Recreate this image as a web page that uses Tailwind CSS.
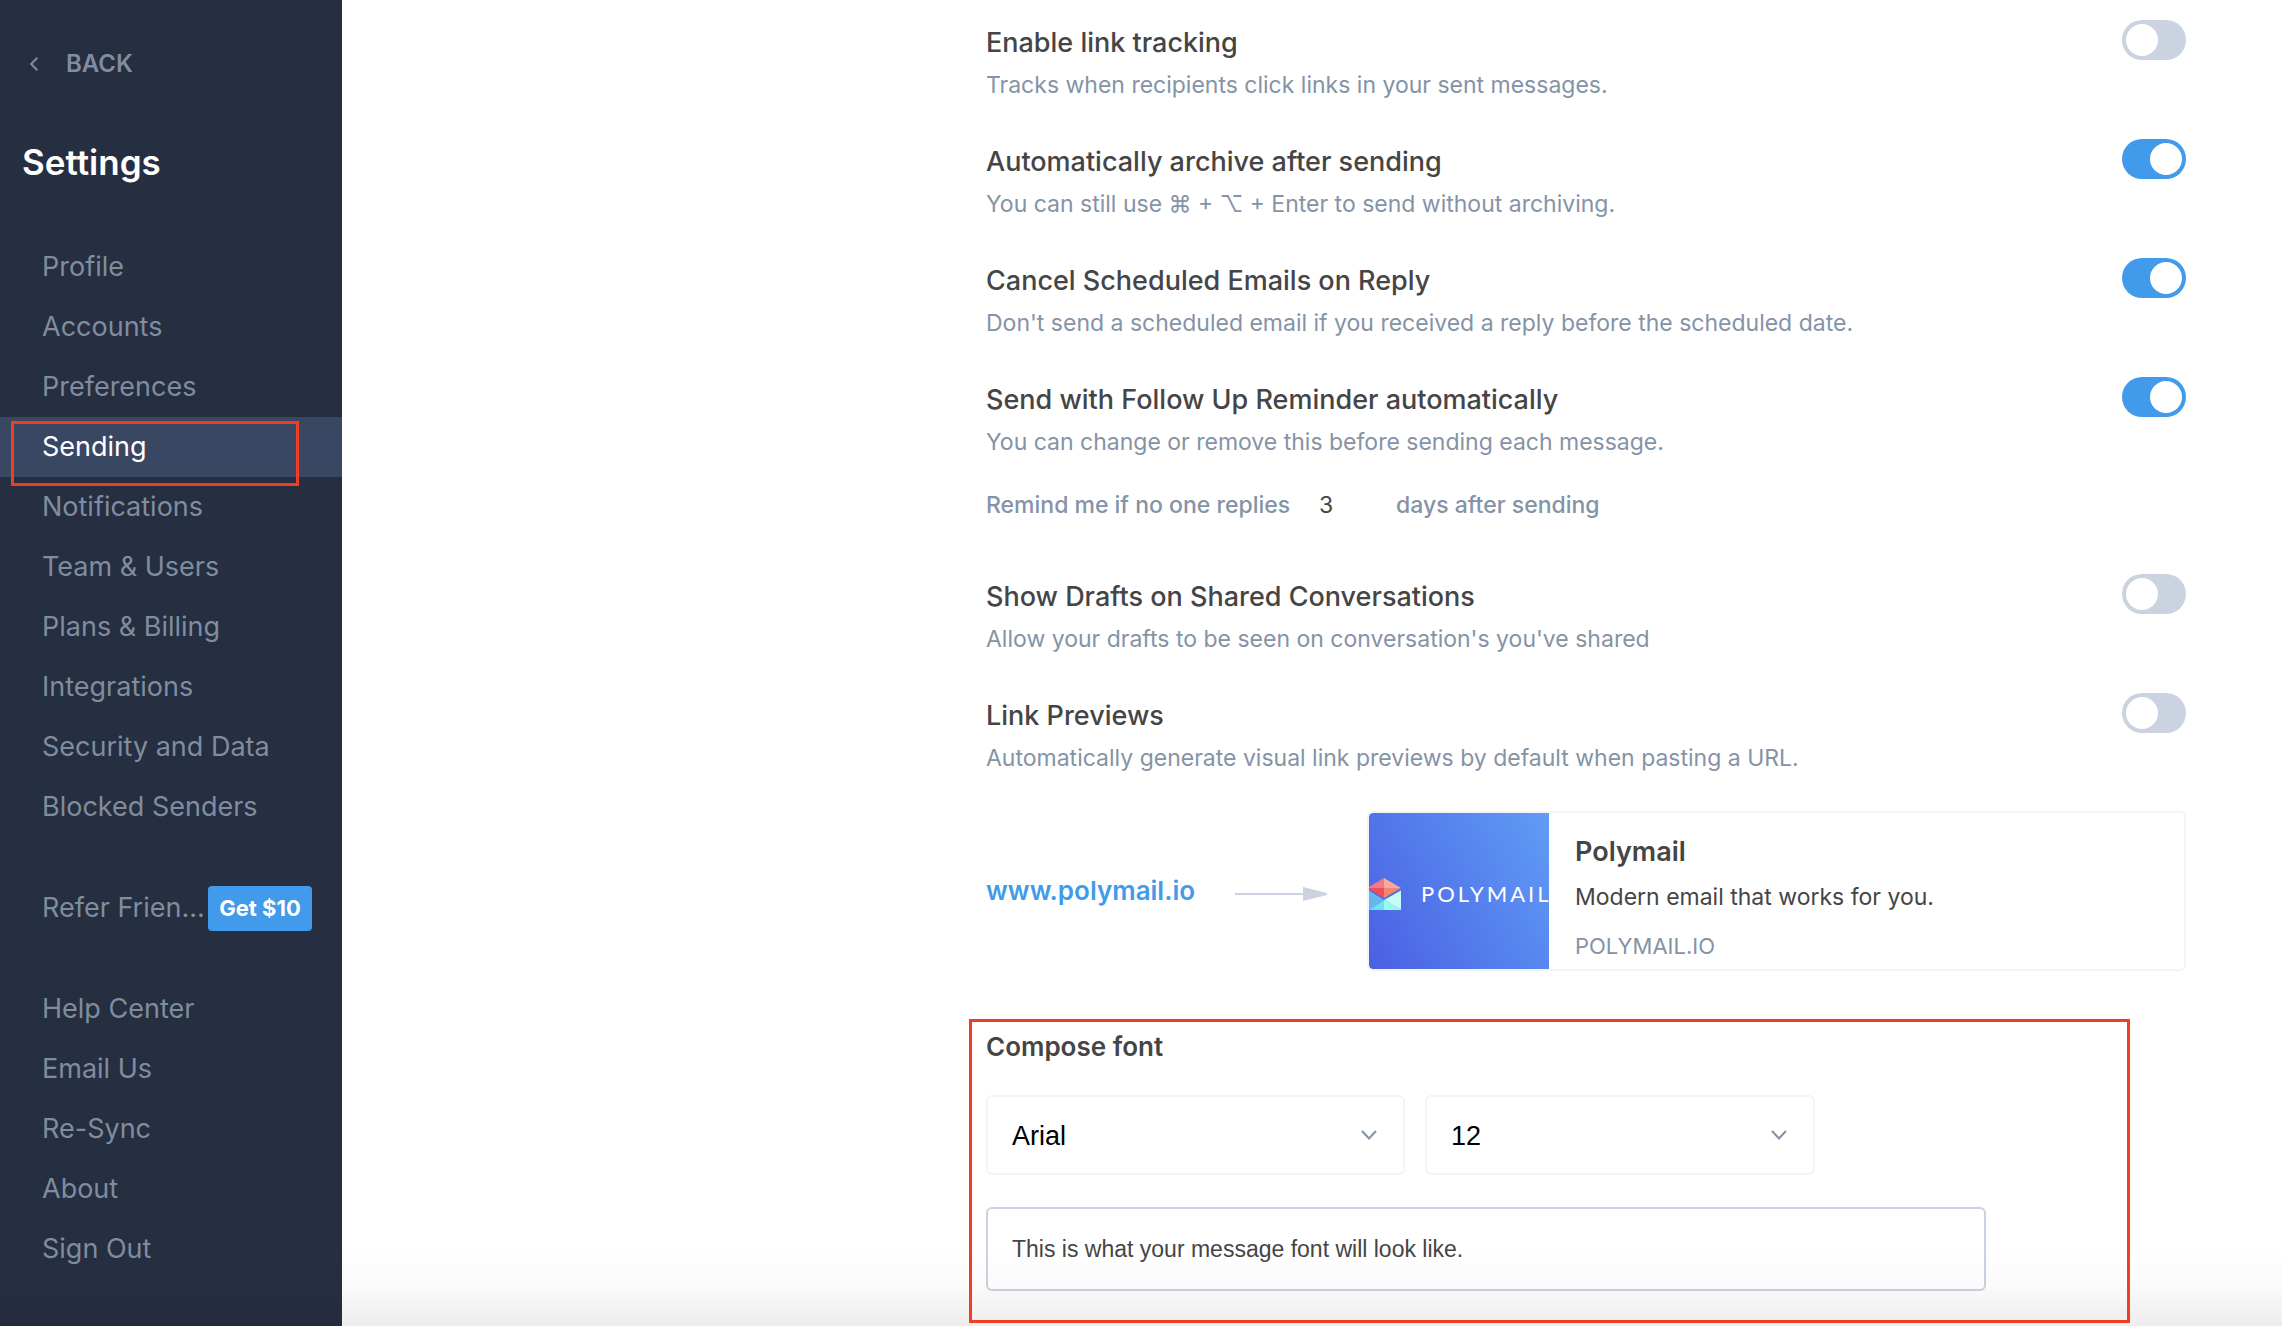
<!DOCTYPE html>
<html lang="en">

<head>
  <meta charset="UTF-8" />
  <meta name="viewport" content="width=device-width, initial-scale=1.0" />
  <title>Settings - Sending</title>
  <script src="https://cdn.jsdelivr.net/npm/@tailwindcss/browser@4"></script>
</head>

<body class="bg-white font-['Inter',sans-serif]">
  <div class="relative min-h-screen flex">
    <!-- Sidebar -->
    <aside class="w-[342px] shrink-0 bg-[#262e42] text-[#7f8d9e] text-[27px]">
      <a href="#" class="flex items-center gap-7 pl-[30px] pt-[46px] text-[24px] leading-9 font-semibold">
        <svg class="w-2 h-[14px]" viewBox="0 0 8 14" fill="none" stroke="currentColor" stroke-width="2">
          <path d="M7.300.7 1.200 7l6.100 6.300" />
        </svg>
        BACK
      </a>
      <h1 class="pl-[22px] pt-[58px] text-[35px] leading-[44px] font-semibold text-white">Settings</h1>
      <nav class="mt-[53px] leading-[60px]">
        <a href="#" class="block pl-[42px]">Profile</a>
        <a href="#" class="block pl-[42px]">Accounts</a>
        <a href="#" class="block pl-[42px]">Preferences</a>
        <a href="#" class="relative block pl-[42px] bg-[#3a4763] text-white">
          Sending
          <span class="absolute left-[11px] top-1 w-[288px] h-[65px] border-3 border-[#ee3e25]"></span>
        </a>
        <a href="#" class="block pl-[42px]">Notifications</a>
        <a href="#" class="block pl-[42px]">Team &amp; Users</a>
        <a href="#" class="block pl-[42px]">Plans &amp; Billing</a>
        <a href="#" class="block pl-[42px]">Integrations</a>
        <a href="#" class="block pl-[42px]">Security and Data</a>
        <a href="#" class="block pl-[42px]">Blocked Senders</a>
        <a href="#" class="mt-[41px] flex items-center justify-between pl-[42px] pr-[30px]">
          <span class="whitespace-nowrap">Refer Frien...</span>
          <span class="w-[104px] shrink-0 rounded bg-[#419bea] text-center text-[22px] leading-[45px] font-bold text-white">Get $10</span>
        </a>
        <a href="#" class="mt-[41px] block pl-[42px]">Help Center</a>
        <a href="#" class="block pl-[42px]">Email Us</a>
        <a href="#" class="block pl-[42px]">Re-Sync</a>
        <a href="#" class="block pl-[42px]">About</a>
        <a href="#" class="block pl-[42px]">Sign Out</a>
      </nav>
    </aside>

    <!-- Main Content -->
    <main class="flex-1 pt-5 pr-24 pb-[3px] pl-6 text-[23px] leading-9 text-[#8493a6]">
      <div class="ml-auto max-w-[1200px]">
        <div class="flex flex-col gap-9">
          <div class="flex items-start justify-between">
            <div class="pt-[5px]">
              <label for="tracking" class="block text-[27px] font-medium text-[#454545]">Enable link tracking</label>
              <p class="mt-[6px]">Tracks when recipients click links in your sent messages.</p>
            </div>
            <input id="tracking" type="checkbox" class="shrink-0 appearance-none w-16 h-10 p-1 rounded-full bg-[#cbd3e0] before:block before:size-8 before:rounded-full before:bg-white checked:bg-[#419bea] checked:before:ml-6" />
          </div>
          <div class="flex items-start justify-between">
            <div class="pt-[5px]">
              <label for="archive" class="block text-[27px] font-medium text-[#454545]">Automatically archive after sending</label>
              <p class="mt-[6px]">You can still use ⌘ + ⌥ + Enter to send without archiving.</p>
            </div>
            <input id="archive" type="checkbox" checked class="shrink-0 appearance-none w-16 h-10 p-1 rounded-full bg-[#cbd3e0] before:block before:size-8 before:rounded-full before:bg-white checked:bg-[#419bea] checked:before:ml-6" />
          </div>
          <div class="flex items-start justify-between">
            <div class="pt-[5px]">
              <label for="cancel" class="block text-[27px] font-medium text-[#454545]">Cancel Scheduled Emails on Reply</label>
              <p class="mt-[6px]">Don't send a scheduled email if you received a reply before the scheduled date.</p>
            </div>
            <input id="cancel" type="checkbox" checked class="shrink-0 appearance-none w-16 h-10 p-1 rounded-full bg-[#cbd3e0] before:block before:size-8 before:rounded-full before:bg-white checked:bg-[#419bea] checked:before:ml-6" />
          </div>
          <div class="flex items-start justify-between">
            <div class="pt-[5px]">
              <label for="followup" class="block text-[27px] font-medium text-[#454545]">Send with Follow Up Reminder automatically</label>
              <p class="mt-[6px]">You can change or remove this before sending each message.</p>
            </div>
            <input id="followup" type="checkbox" checked class="shrink-0 appearance-none w-16 h-10 p-1 rounded-full bg-[#cbd3e0] before:block before:size-8 before:rounded-full before:bg-white checked:bg-[#419bea] checked:before:ml-6" />
          </div>
        </div>

        <div class="mt-[27px] flex items-center font-medium">
          <label for="days" class="w-[309px] whitespace-nowrap">Remind me if no one replies</label>
          <input id="days" type="text" value="3" class="w-[101px] h-9 pl-6 font-normal text-[#454545]" />
          <span>days after sending</span>
        </div>

        <div class="mt-[51px] flex flex-col gap-9">
          <div class="flex items-start justify-between">
            <div class="pt-[5px]">
              <label for="drafts" class="block text-[27px] font-medium text-[#454545]">Show Drafts on Shared Conversations</label>
              <p class="mt-[6px]">Allow your drafts to be seen on conversation's you've shared</p>
            </div>
            <input id="drafts" type="checkbox" class="shrink-0 appearance-none w-16 h-10 p-1 rounded-full bg-[#cbd3e0] before:block before:size-8 before:rounded-full before:bg-white checked:bg-[#419bea] checked:before:ml-6" />
          </div>
          <div class="flex items-start justify-between">
            <div class="pt-[5px]">
              <label for="previews" class="block text-[27px] font-medium text-[#454545]">Link Previews</label>
              <p class="mt-[6px]">Automatically generate visual link previews by default when pasting a URL.</p>
            </div>
            <input id="previews" type="checkbox" class="shrink-0 appearance-none w-16 h-10 p-1 rounded-full bg-[#cbd3e0] before:block before:size-8 before:rounded-full before:bg-white checked:bg-[#419bea] checked:before:ml-6" />
          </div>
        </div>

        <!-- Link preview example -->
        <div class="mt-[35px] flex items-center">
          <a href="#" class="w-[249px] shrink-0 text-[26px] font-semibold text-[#419bea]">www.polymail.io</a>
          <svg class="mt-[6px] w-[92px] h-[14px] shrink-0" viewBox="0 0 92 14" fill="#cbd3e0">
            <path d="M0 6h68V0l24 6v2l-24 6V8H0z" />
          </svg>
          <div class="ml-10 flex-1 h-40 flex overflow-hidden rounded-md border-2 border-[#f3f4fa]">
            <div class="w-[180px] shrink-0 flex items-center gap-5 overflow-hidden rounded-l bg-linear-60 from-[#4b5fe3] to-[#609cf5] pt-[6px]">
              <svg class="w-8 h-8 shrink-0" viewBox="0 0 32 32">
                <path fill="#66b5ec" d="M0 12.500 15 22 0 32z" />
                <path fill="#c4fdf6" d="M32 12.500V32L15 22z" />
                <path fill="#72dff0" d="M0 32l15-10v10z" />
                <path fill="#97fbf0" d="M15 22l17 10H15z" />
                <path fill="#f07a85" d="M15 0v10H0V9z" />
                <path fill="#f5ab98" d="M15 0l17 10H15z" />
                <path fill="#ee4e5d" d="M0 10h15v10L0 11z" />
                <path fill="#f3866c" d="M15 10h17L15 20z" />
              </svg>
              <span class="font-['Lato',sans-serif] text-[22px] tracking-[3px] text-white">POLYMAIL</span>
            </div>
            <div class="flex flex-col pl-[26px] pt-[21px]">
              <h2 class="text-[27px] font-semibold text-[#454545]">Polymail</h2>
              <p class="mt-[9px] text-[#454545]">Modern email that works for you.</p>
              <p class="mt-[13px] text-[22px]">POLYMAIL.IO</p>
            </div>
          </div>
        </div>

        <!-- Compose font -->
        <section class="relative mt-12 pt-[10px] pb-8">
          <h2 class="text-[26px] font-semibold text-[#454545]">Compose font</h2>
          <div class="mt-[30px] flex gap-5 font-['Liberation_Sans',Arial,sans-serif] text-[27px] text-black">
            <div class="relative w-[419px]">
              <select aria-label="Font family" class="w-full h-20 appearance-none rounded-md border-2 border-[#f3f4fa] bg-transparent px-6 pt-[2px]">
                <option>Arial</option>
              </select>
              <svg class="pointer-events-none absolute right-7 top-[35px] w-4 h-[10px]" viewBox="0 0 16 10" fill="none" stroke="#8292a6" stroke-width="2">
                <path d="M1 1l7 7.500L15 1" />
              </svg>
            </div>
            <div class="relative w-[390px]">
              <select aria-label="Font size" class="w-full h-20 appearance-none rounded-md border-2 border-[#f3f4fa] bg-transparent px-6 pt-[2px]">
                <option>12</option>
              </select>
              <svg class="pointer-events-none absolute right-7 top-[35px] w-4 h-[10px]" viewBox="0 0 16 10" fill="none" stroke="#8292a6" stroke-width="2">
                <path d="M1 1l7 7.500L15 1" />
              </svg>
            </div>
          </div>
          <div class="mt-8 max-w-[1000px] rounded-md border-2 border-[#cad3e0] px-6 py-[22px] font-['Liberation_Sans',Arial,sans-serif] text-[#454545]">This is what your message font will look like.</div>
          <div class="pointer-events-none absolute inset-y-0 -left-[17px] right-14 z-10 border-3 border-[#ee3e25]"></div>
        </section>
      </div>
    </main>

    <!-- Fade at the bottom edge -->
    <div class="pointer-events-none absolute inset-x-0 bottom-0 h-20 bg-linear-to-b from-black/0 via-black/2 to-black/7"></div>
  </div>
</body>

</html>
